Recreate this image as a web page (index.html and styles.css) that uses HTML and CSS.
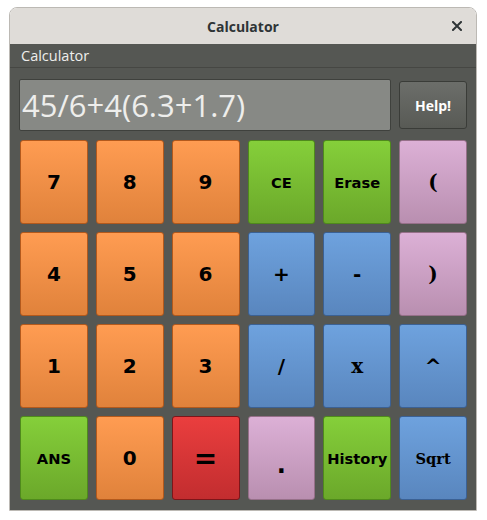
FILE: index.html
```html
<!DOCTYPE html>
<html>
<head>
<meta charset="utf-8">
<title>Calculator</title>
<link rel="stylesheet" href="styles.css">
</head>
<body>
<div class="window">
  <header class="titlebar">
    <span class="title">Calculator</span>
    <span class="close" aria-label="Close">
      <svg width="10" height="10" viewBox="0 0 10 10"><path d="M1 1L9 9M9 1L1 9" stroke="#2e3436" stroke-width="2" stroke-linecap="square"/></svg>
    </span>
  </header>
  <div class="menubar">Calculator</div>
  <main class="content">
    <div class="top">
      <div class="display">45/6+4(6.3+1.7)</div>
      <button class="help">Help!</button>
    </div>
    <div class="keys">
      <button class="key orange">7</button>
      <button class="key orange">8</button>
      <button class="key orange">9</button>
      <button class="key green word">CE</button>
      <button class="key green word">Erase</button>
      <button class="key pink serif">(</button>

      <button class="key orange">4</button>
      <button class="key orange">5</button>
      <button class="key orange">6</button>
      <button class="key blue">+</button>
      <button class="key blue">-</button>
      <button class="key pink serif">)</button>

      <button class="key orange">1</button>
      <button class="key orange">2</button>
      <button class="key orange">3</button>
      <button class="key blue">/</button>
      <button class="key blue serif">x</button>
      <button class="key blue">^</button>

      <button class="key green word">ANS</button>
      <button class="key orange">0</button>
      <button class="key red eq">=</button>
      <button class="key pink dot">.</button>
      <button class="key green word">History</button>
      <button class="key blue serif word">Sqrt</button>
    </div>
  </main>
</div>
</body>
</html>
```
FILE: styles.css
```css
html, body {
  margin: 0;
  padding: 0;
  background: #ffffff;
}

.window {
  margin: 7px 0 0 9px;
  width: 466px;
  border: 1px solid #bcb9b4;
  border-radius: 8px 8px 0 0;
  overflow: hidden;
  font-family: "Open Sans", "DejaVu Sans", sans-serif;
}

.titlebar {
  height: 36px;
  background: #dfdcd8;
  display: flex;
  align-items: center;
  justify-content: center;
  position: relative;
}

.title {
  font-size: 14px;
  font-weight: 700;
  color: #2e3436;
}

.close {
  position: absolute;
  right: 14px;
  top: 13px;
  width: 10px;
  height: 10px;
  display: block;
}

.close svg {
  display: block;
}

.menubar {
  height: 23px;
  background: #555753;
  border-bottom: 1px solid #464743;
  color: #eeeeec;
  font-size: 14.5px;
  line-height: 23px;
  padding-left: 11px;
}

.content {
  background: #555753;
  padding: 11px 9px 10px 9px;
}

.top {
  display: flex;
  align-items: center;
  gap: 8px;
  height: 52px;
  margin-bottom: 9px;
}

.display {
  flex: 1;
  height: 50px;
  box-sizing: border-box;
  height: 52px;
  background: #878985;
  border: 1px solid #3f413d;
  border-radius: 2px;
  color: #eeeeec;
  font-family: "Open Sans", sans-serif;
  font-size: 31px;
  line-height: 50px;
  padding-left: 2px;
  white-space: nowrap;
}

.help {
  width: 68px;
  height: 48px;
  margin: 0;
  padding: 0;
  border: 1px solid #3a3c38;
  border-radius: 3px;
  background: linear-gradient(#6c6e6a, #585a55);
  color: #ffffff;
  font-family: "Open Sans", sans-serif;
  font-weight: 700;
  font-size: 14px;
}

.keys {
  margin-left: 1px;
  width: 447px;
  display: grid;
  grid-template-columns: repeat(6, 1fr);
  grid-auto-rows: 84px;
  gap: 8px;
}

.key {
  margin: 0;
  padding: 0;
  border: 1px solid;
  border-radius: 3px;
  font-family: "DejaVu Sans", sans-serif;
  font-weight: 700;
  font-size: 20px;
  color: #000000;
  display: flex;
  align-items: center;
  justify-content: center;
}

.key.word {
  font-size: 14.7px;
}

.key.serif {
  font-family: "DejaVu Serif", serif;
}

.key.eq {
  font-size: 28px;
}

.key.dot {
  font-size: 24px;
  padding-top: 14px;
}

.orange {
  background: linear-gradient(#ff9c52, #e0823b);
  border-color: #b3591c;
}

.green {
  background: linear-gradient(#85cf3a, #6ba82a);
  border-color: #4f8a1c;
}

.blue {
  background: linear-gradient(#6ea2de, #5986be);
  border-color: #3b6194;
}

.pink {
  background: linear-gradient(#dcb0d6, #b98fb0);
  border-color: #967089;
}

.red {
  background: linear-gradient(#ea3e3e, #c22d2f);
  border-color: #7e1519;
}
```
